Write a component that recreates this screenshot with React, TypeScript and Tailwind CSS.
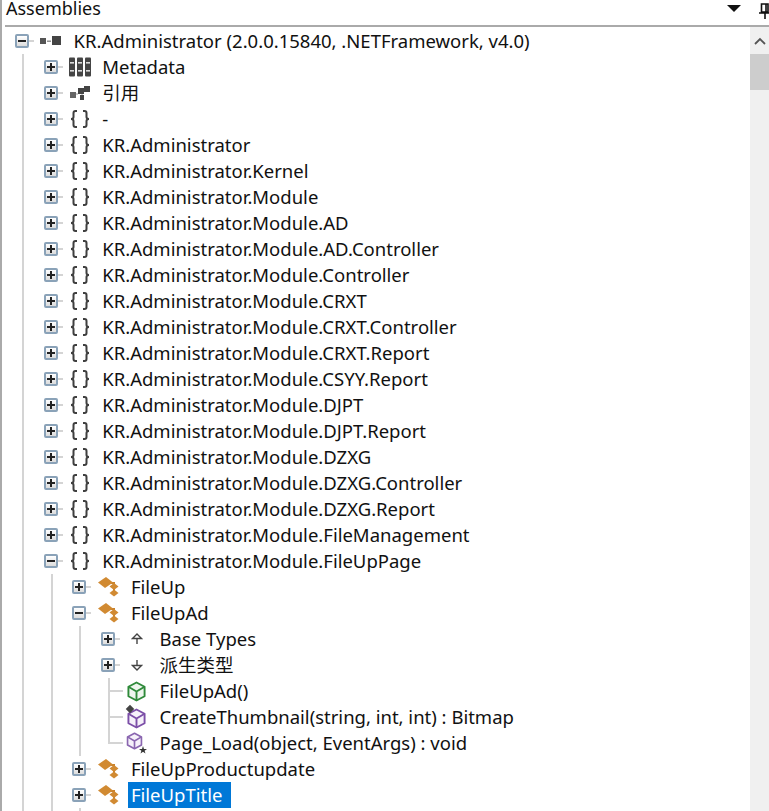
import React from "react";

type Kind = "asm" | "meta" | "refs" | "ns" | "cls" | "base" | "der" | "ctor" | "method" | "protected";
type Node = { t: string; k: Kind; l: number; e?: "+" | "-"; sel?: boolean; elbow?: "mid" | "end" };

const ns = (t: string, e: "+" | "-" = "+"): Node => ({ t, k: "ns", l: 1, e });
const P = "KR.Administrator.Module";

const rows: Node[] = [
  { t: "KR.Administrator (2.0.0.15840, .NETFramework, v4.0)", k: "asm", l: 0, e: "-" },
  { t: "Metadata", k: "meta", l: 1, e: "+" },
  { t: "引用", k: "refs", l: 1, e: "+" },
  ns("-"),
  ns("KR.Administrator"),
  ns("KR.Administrator.Kernel"),
  ns(P),
  ns(P + ".AD"),
  ns(P + ".AD.Controller"),
  ns(P + ".Controller"),
  ns(P + ".CRXT"),
  ns(P + ".CRXT.Controller"),
  ns(P + ".CRXT.Report"),
  ns(P + ".CSYY.Report"),
  ns(P + ".DJPT"),
  ns(P + ".DJPT.Report"),
  ns(P + ".DZXG"),
  ns(P + ".DZXG.Controller"),
  ns(P + ".DZXG.Report"),
  ns(P + ".FileManagement"),
  ns(P + ".FileUpPage", "-"),
  { t: "FileUp", k: "cls", l: 2, e: "+" },
  { t: "FileUpAd", k: "cls", l: 2, e: "-" },
  { t: "Base Types", k: "base", l: 3, e: "+" },
  { t: "派生类型", k: "der", l: 3, e: "+" },
  { t: "FileUpAd()", k: "ctor", l: 3, elbow: "mid" },
  { t: "CreateThumbnail(string, int, int) : Bitmap", k: "method", l: 3, elbow: "mid" },
  { t: "Page_Load(object, EventArgs) : void", k: "protected", l: 3, elbow: "end" },
  { t: "FileUpProductupdate", k: "cls", l: 2, e: "+" },
  { t: "FileUpTitle", k: "cls", l: 2, e: "+", sel: true },
];

function Expander({ open }: { open: boolean }) {
  return (
    <div className="w-[14px] h-[14px] shrink-0 flex items-center justify-center rounded-[2px] border-2 border-[#8aa2b8] bg-gradient-to-b from-white to-[#dcdcdc]">
      <svg width="8" height="8" viewBox="0 0 8 8">
        <rect x="0" y="3" width="8" height="2" fill="#222" />
        {!open && <rect x="3" y="0" width="2" height="8" fill="#222" />}
      </svg>
    </div>
  );
}

function Cube({ color, fill, w = 19, h = 21 }: { color: string; fill: string; w?: number; h?: number }) {
  return (
    <svg width={w} height={h} viewBox="0 0 20 22" fill={fill} stroke={color} strokeWidth="2" strokeLinejoin="round">
      <path d="M10 1.5 18.5 6V16L10 20.5 1.5 16V6Z" />
      <path d="M1.5 6 10 11 18.5 6M10 11V20.5" fill="none" />
    </svg>
  );
}

function Icon({ k }: { k: Kind }) {
  switch (k) {
    case "asm":
      return (
        <svg width="22" height="12" viewBox="0 0 22 12">
          <rect x="0" y="3" width="6" height="6" fill="#555" />
          <rect x="7" y="5.5" width="4" height="1.4" fill="#888" />
          <rect x="12" y="1" width="9" height="9" fill="#444" />
        </svg>
      );
    case "meta":
      return (
        <svg width="22" height="20" viewBox="0 0 22 20">
          {[0, 8, 16].map((x) => (
            <g key={x}>
              <rect x={x} y="0.5" width="6" height="19" rx="1" fill="#454545" />
              <rect x={x + 1} y="5" width="4" height="1.6" fill="#ddd" />
              <rect x={x + 1} y="13" width="4" height="1.6" fill="#ddd" />
            </g>
          ))}
        </svg>
      );
    case "refs":
      return (
        <svg width="20" height="15" viewBox="0 0 20 15" fill="#444">
          <rect x="0" y="6" width="6" height="6" fill="#666" />
          <rect x="8" y="2" width="6" height="6" />
          <rect x="10" y="9" width="4" height="5" />
          <rect x="14" y="0" width="6" height="6" />
          <path d="M6 8H8M12 8V9" stroke="#999" strokeWidth="1" />
        </svg>
      );
    case "ns":
      return (
        <svg width="20" height="18" viewBox="0 0 20 18" fill="none" stroke="#3f3f3f" strokeWidth="2">
          <path d="M7 1H5.5C4 1 3.5 2 3.5 3V7C3.5 8 2.5 9 1 9 2.5 9 3.5 10 3.5 11V15C3.5 16 4 17 5.5 17H7" />
          <path d="M13 1H14.5C16 1 16.5 2 16.5 3V7C16.5 8 17.5 9 19 9 17.5 9 16.5 10 16.5 11V15C16.5 16 16 17 14.5 17H13" />
        </svg>
      );
    case "cls":
      return (
        <svg width="21" height="20" viewBox="0 0 21 20">
          <path d="M8 6H16V15" fill="none" stroke="#c9822d" strokeWidth="2" />
          <path d="M8 0 15 5.5 7 11 0 5.5Z" fill="#d18a32" />
          <path d="M16 6 20.5 9.5 16 13 11.5 9.5Z" fill="#d18a32" />
          <path d="M16 12.5 20.5 16 16 19.5 11.5 16Z" fill="#d18a32" />
        </svg>
      );
    case "base":
      return (
        <svg width="12" height="12" viewBox="0 0 12 12" fill="none" stroke="#444" strokeWidth="1.4">
          <path d="M6 1 10.5 5.5H1.5Z" />
          <path d="M6 5.5V11" />
        </svg>
      );
    case "der":
      return (
        <svg width="12" height="12" viewBox="0 0 12 12" fill="none" stroke="#444" strokeWidth="1.4">
          <path d="M6 11 10.5 6.5H1.5Z" />
          <path d="M6 6.5V1" />
        </svg>
      );
    case "ctor":
      return <Cube color="#2f8a3a" fill="#eef6ee" />;
    case "method":
      return (
        <div className="relative flex mt-[2px]">
          <Cube color="#7c4fa8" fill="#f6f1fa" />
          <div className="absolute left-0 top-[-2px] w-[6px] h-[6px] rotate-45 bg-[#444]" />
        </div>
      );
    case "protected":
      return (
        <div className="relative flex -mt-[4px] -ml-[4px]">
          <Cube color="#8a66b0" fill="#f6f1fa" w={17} h={18} />
          <svg width="8" height="8" viewBox="0 0 10 10" className="absolute -right-[4px] -bottom-[4px]">
            <path d="M5 0 6.2 3.6H10L7 5.9 8.1 9.5 5 7.3 1.9 9.5 3 5.9 0 3.6H3.8Z" fill="#333" />
          </svg>
        </div>
      );
  }
}

function Guide() {
  return (
    <div className="w-[28.67px] h-full shrink-0 pl-[7px]">
      <div className="w-[2px] h-full bg-[#d4d4d4]" />
    </div>
  );
}

function Row({ n }: { n: Node }) {
  return (
    <div className="flex items-center h-[26px] shrink-0 whitespace-nowrap">
      {Array.from({ length: n.l }, (_, i) => (
        <Guide key={i} />
      ))}
      <div className="w-[58.6px] h-full shrink-0 flex items-center relative">
        {n.e ? (
          <>
            <Expander open={n.e === "-"} />
            <div className="w-[5px] h-[2px] bg-[#d4d4d4]" />
          </>
        ) : (
          <div className="h-full w-full pl-[7px]">
            <div className={`w-[2px] bg-[#d4d4d4] ${n.elbow === "end" ? "h-1/2" : "h-full"}`} />
            <div className="absolute left-[7px] top-[12px] w-[15px] h-[2px] bg-[#d4d4d4]" />
          </div>
        )}
        <div className="absolute left-[23px] top-0 h-full w-[26px] flex items-center justify-center">
          <Icon k={n.k} />
        </div>
      </div>
      <div
        className={`-ml-[3px] pl-[3px] pr-[9px] h-full flex items-center text-[18.5px] leading-none ${
          n.sel ? "bg-[#0078d7] text-white" : "text-[#111]"
        }`}
      >
        {n.t}
      </div>
    </div>
  );
}

export default function App() {
  return (
    <div
      className="w-[769px] h-[811px] overflow-hidden bg-white flex flex-col border-l-2 border-[#aaaaaa]"
      style={{ fontFamily: '"Noto Sans", "Noto Sans CJK SC", sans-serif' }}
    >
      <div className="h-[25px] shrink-0 flex items-center pl-[4px] overflow-hidden">
        <span className="text-[18px] leading-none text-[#111] -mt-[9px]">Assemblies</span>
        <div className="flex-1" />
        <svg width="14" height="7" viewBox="0 0 14 7" className="mr-[18px] -mt-[8px]">
          <path d="M0 0H14L7 7Z" fill="#111" />
        </svg>
        <svg width="10" height="16" viewBox="0 0 10 16" className="-mt-[4px]" fill="none" stroke="#111" strokeWidth="1.6">
          <path d="M2.5 1H9V9H2.5ZM0 10H10M6 10V16M7 1V9" />
        </svg>
      </div>
      <div className="h-[2px] ml-[3px] shrink-0 bg-[#aaaaaa]" />
      <div className="flex-1 flex min-h-0">
        <div className="flex-1 min-w-0 flex flex-col overflow-hidden pl-[13px] pt-[1px]">
          {rows.map((n, i) => (
            <Row key={i} n={n} />
          ))}
          <div className="flex-1 flex">
            <Guide />
            <Guide />
            <Guide />
          </div>
        </div>
        <div className="w-[19px] shrink-0 bg-[#f0f0f0] flex flex-col">
          <div className="h-[27px] flex items-center justify-center">
            <svg width="12" height="8" viewBox="0 0 12 8" fill="none" stroke="#555" strokeWidth="1.8">
              <path d="M1 7 6 2 11 7" />
            </svg>
          </div>
          <div className="h-[36px] bg-[#cdcdcd]" />
        </div>
      </div>
    </div>
  );
}
